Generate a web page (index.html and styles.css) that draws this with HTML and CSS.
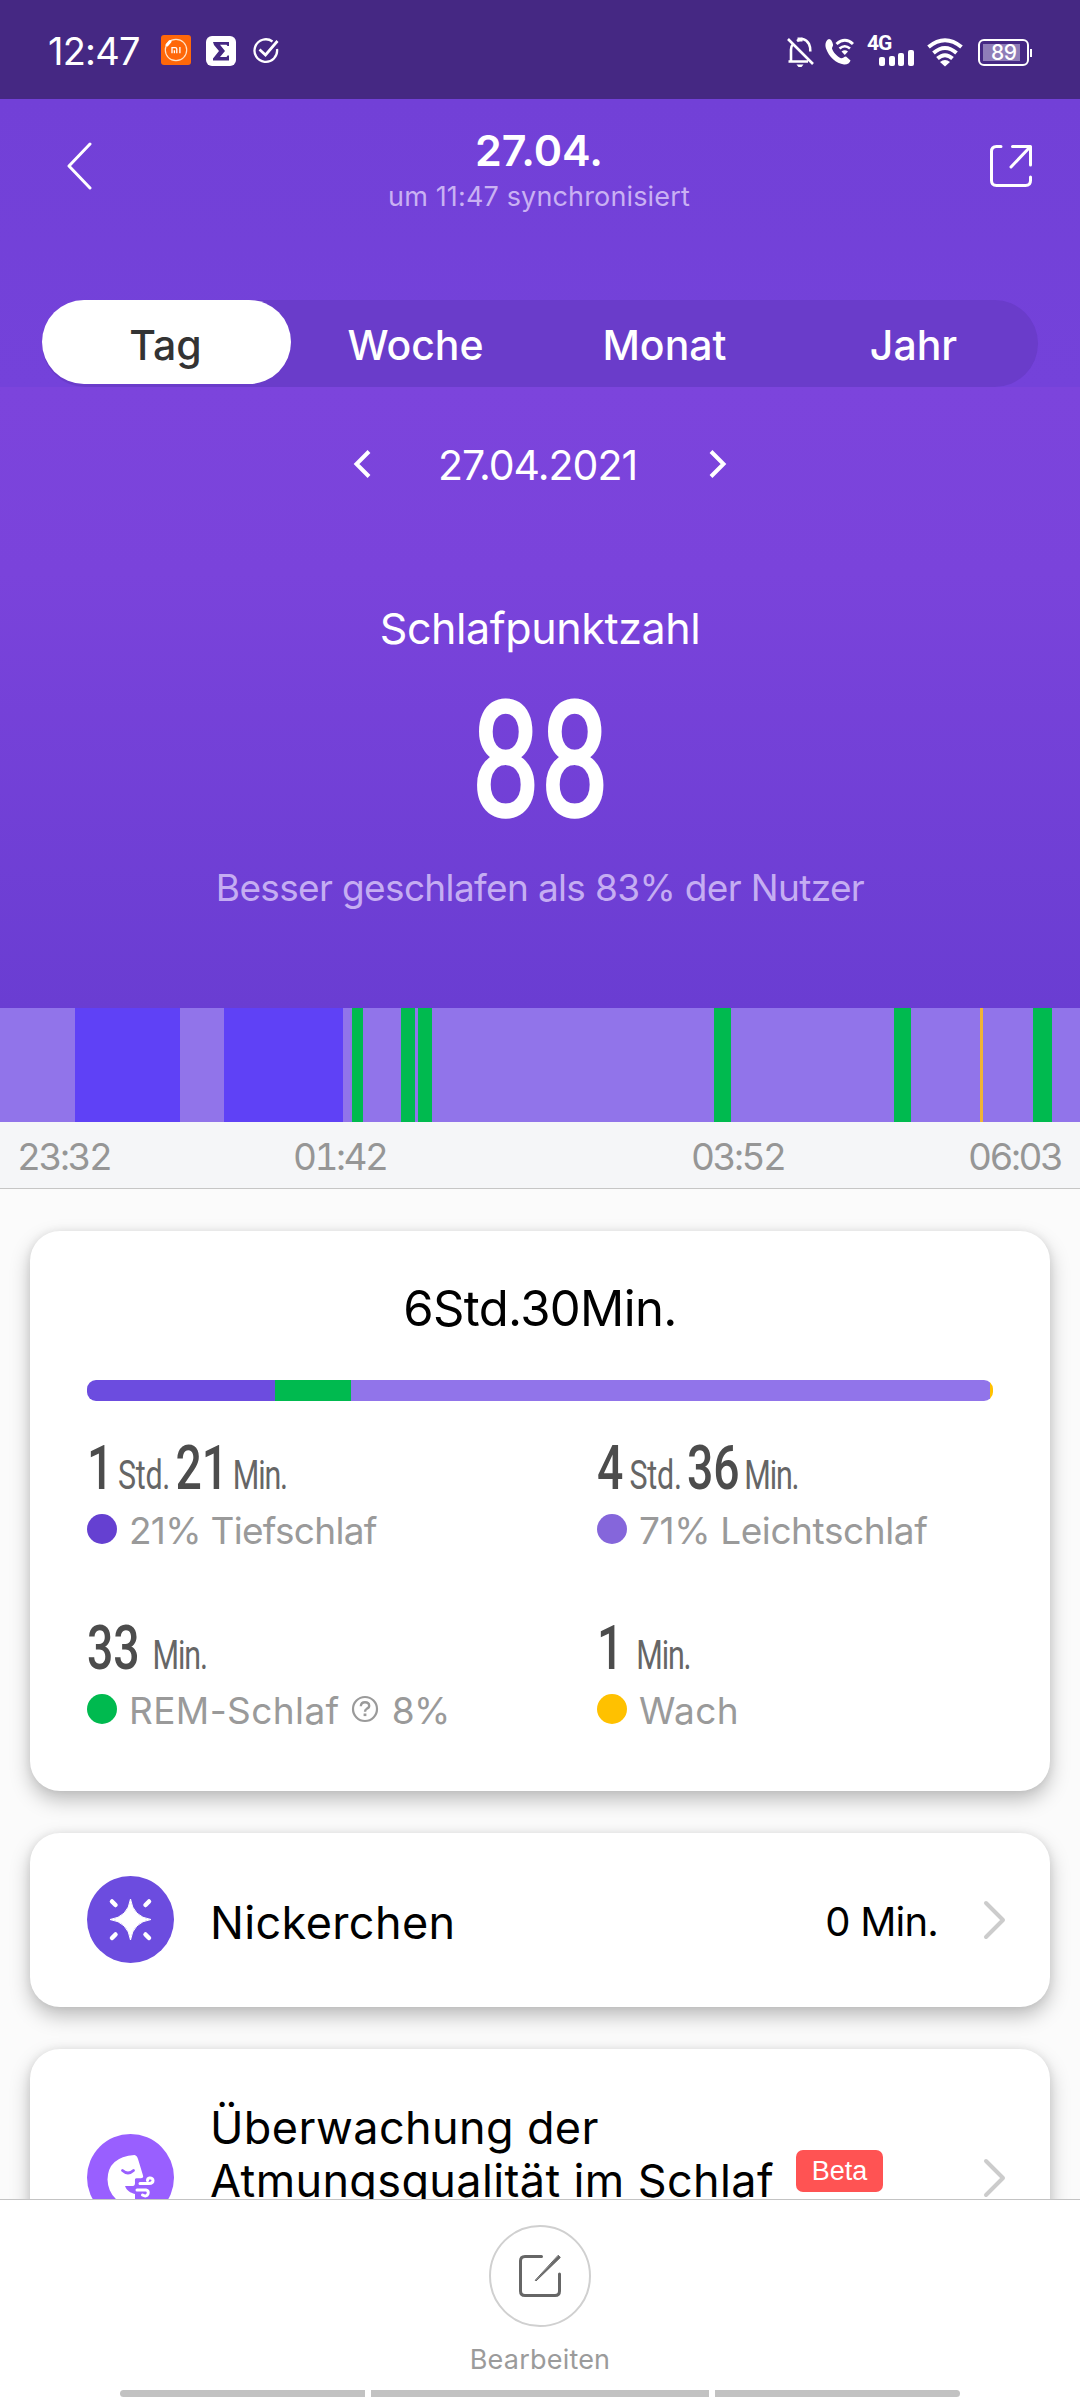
FILE: index.html
```html
<!DOCTYPE html>
<html lang="de">
<head>
<meta charset="utf-8">
<title>Schlaf</title>
<link rel="stylesheet" href="styles.css">
</head>
<body>
<div class="status">
  <span class="clock">12:47</span>
  <svg class="st-mi" width="30" height="30" viewBox="0 0 30 30"><rect width="30" height="30" rx="3" fill="#ff6709"/><circle cx="15" cy="15" r="10.700" fill="none" stroke="#ffe3c8" stroke-width="1.200"/><path d="M6 10l3-3.500" stroke="#fff" stroke-width="3" stroke-linecap="round"/><path d="M11 18.300v-5.600h3.300q1.500 0 1.500 1.300v4.300M13.400 18.300v-3M18.900 12v6.300" fill="none" stroke="#fff" stroke-width="1.300"/></svg>
  <svg class="st-sigma" width="30" height="30" viewBox="0 0 30 30"><rect width="30" height="30" rx="6" fill="#fff"/><path d="M7 6h16v4h-1.500l-1-1.300H14l5 6.300-5 6h6.500l1-1.500H23V24.500H7v-2l6-7.500-5-6z" fill="#452883"/></svg>
  <svg class="st-check" width="26" height="26" viewBox="0 0 26 26" fill="none" stroke="#fff" stroke-width="2.300"><path d="M19.500 3.500A11.300 11.300 0 1 0 24 11"/><path d="M6.500 11.500l6 5.500L24.500 3" stroke-width="2.700"/></svg>
  <span class="fill"></span>
  <svg class="st-bell" width="28" height="30" viewBox="0 0 28 30" fill="none" stroke="#fff" stroke-width="2.600"><path d="M4 24V12.500Q4.200 9 6 7M10 4Q17-1 22 7q1.500 3 1.300 7.500M1.500 24.500H21M1 2l25 25"/><path d="M9.500 27.500h7l-2 2.500h-3z" fill="#fff" stroke="none"/><path d="M10.500 2.500h5" stroke-width="4"/></svg>
  <svg class="st-call" width="29" height="28" viewBox="0 0 29 28" fill="none" stroke="#fff"><path d="M4 1C1 2-.5 6 1 10.500 4 19 11 25.500 19 26.500c3 .3 6-1.500 6.500-4l-4.500-4c-2 0-3 2-5 1.800C12 18.500 8 14 7 10.500 7 9 8.500 8 8 6.500 7.500 4 6 1 4 1z" fill="#fff" stroke="none"/><path d="M11.500 6Q20-1.500 28 6" stroke-width="3"/><path d="M14.500 10.500q5.300-4.500 10.500 0" stroke-width="2.600"/><path d="M16.500 13.500q3.300-2.500 6.500 0l-3.200 3.500z" fill="#fff" stroke="none"/></svg>
  <div class="signal">
    <span>4G</span>
    <div class="signal-bars"><i class="b1"></i><i class="b2"></i><i class="b3"></i><i class="b4"></i></div>
  </div>
  <svg class="st-wifi" width="36" height="29" viewBox="0 0 36 29" fill="none" stroke="#fff" stroke-width="4"><path d="M1.500 9Q18-4.500 34.500 9"/><path d="M6.500 15Q18 5 29.500 15"/><path d="M10.500 20.500q7.500-6.500 15 0"/><path d="M13 24q5-4 10 0l-5 4.500z" fill="#fff" stroke="none"/></svg>
  <div class="battery"><span>89</span></div>
</div>

<header class="header">
  <div class="title-row">
    <svg class="back" width="25" height="48" viewBox="0 0 25 48" fill="none" stroke="#fff" stroke-width="3" stroke-linecap="round" stroke-linejoin="round"><path d="M23 2L2 24l21 22"/></svg>
    <div class="titles">
      <h1>27.04.</h1>
      <p>um 11:47 synchronisiert</p>
    </div>
    <svg class="share" width="44" height="44" viewBox="0 0 44 44" fill="none" stroke="#fff" stroke-width="3" stroke-linecap="round" stroke-linejoin="round"><path d="M12 2.500H7.500q-5 0-5 5v29q0 5 5 5h29q5 0 5-5V33"/><path d="M23.500 2.500h18V21"/><path d="M40.500 3.500L22 23"/></svg>
  </div>
  <nav class="tabs">
    <span class="tab active">Tag</span><span class="tab">Woche</span><span class="tab">Monat</span><span class="tab">Jahr</span>
  </nav>
</header>

<section class="hero">
  <div class="date">
    <svg width="18" height="28" viewBox="0 0 18 28" fill="none" stroke="#fff" stroke-width="4"><path d="M16 1.500L3.500 14 16 26.500"/></svg>
    <span>27.04.2021</span>
    <svg width="18" height="28" viewBox="0 0 18 28" fill="none" stroke="#fff" stroke-width="4"><path d="M2 1.500L14.500 14 2 26.500"/></svg>
  </div>
  <div class="score-label">Schlafpunktzahl</div>
  <div class="score">88</div>
  <div class="score-note">Besser geschlafen als 83% der Nutzer</div>
</section>

<div class="timeline">
  <i style="width:74.500px"></i><i class="deep" style="width:105.500px"></i><i style="width:44px"></i><i class="deep" style="width:119px"></i><i style="width:8.500px"></i><i class="rem" style="width:11px"></i><i style="width:38.500px"></i><i class="rem" style="width:14px"></i><i style="width:3px"></i><i class="rem" style="width:14px"></i><i style="width:282px"></i><i class="rem" style="width:16.500px"></i><i style="width:163.500px"></i><i class="rem" style="width:16.500px"></i><i style="width:69.500px"></i><i class="awake" style="width:3px"></i><i style="width:49.500px"></i><i class="rem" style="width:19.500px"></i>
</div>
<div class="axis"><span>23:32</span><span>01:42</span><span>03:52</span><span>06:03</span></div>

<main class="content">
  <section class="card summary">
    <h2>6Std.30Min.</h2>
    <div class="bar"><i class="deep" style="width:187.500px"></i><i class="rem" style="width:76.500px"></i><i class="light"></i><i class="awake" style="width:3px"></i></div>
    <div class="stats">
      <div class="stat">
        <div class="value"><b class="one">1</b><small class="hours">Std.</small><b class="minutes">21</b><small class="min">Min.</small></div>
        <div class="label"><i class="dot deep"></i><span class="tighter">21% Tiefschlaf</span></div>
      </div>
      <div class="stat">
        <div class="value"><b>4</b><small class="hours">Std.</small><b class="minutes">36</b><small class="min">Min.</small></div>
        <div class="label"><i class="dot light"></i><span class="tight">71% Leichtschlaf</span></div>
      </div>
      <div class="stat">
        <div class="value"><b>33</b><small class="min alone">Min.</small></div>
        <div class="label"><i class="dot rem"></i><span class="loose">REM-Schlaf</span>
          <svg class="help" width="28" height="28" viewBox="0 0 28 28" fill="none" stroke="#9a9a9a" stroke-width="2.200"><circle cx="14" cy="14" r="12"/><path d="M9.800 11.200q.2-4 4.200-4t4.200 3.500q0 2-2.300 3-1.900 1-1.900 3" stroke-width="2.400"/><path d="M14 18.500v2.600" stroke-width="2.800"/></svg>
          <span class="tighter">8%</span></div>
      </div>
      <div class="stat">
        <div class="value"><b>1</b><small class="min alone">Min.</small></div>
        <div class="label"><i class="dot awake"></i><span class="loose">Wach</span></div>
      </div>
    </div>
  </section>

  <section class="card row nap">
    <svg class="badge-icon" width="87" height="87" viewBox="0 0 87 87"><circle cx="43.500" cy="43.500" r="43.500" fill="#6c4cdf"/><path d="M43.500 23Q46 41 64 43.500 46 46 43.500 64 41 46 23 43.500 41 41 43.500 23z" fill="#fff" stroke="#fff" stroke-width="1"/><path d="M25 25.500l3.500 3.500M62 25.500L58.500 29M25 62l3.500-3.500M62 62l-3.500-3.500" stroke="#fff" stroke-width="4.500" stroke-linecap="round"/></svg>
    <span class="name">Nickerchen</span>
    <span class="fill"></span>
    <span class="amount">0 Min.</span>
    <svg class="chev" width="24" height="40" viewBox="0 0 24 40"><path d="M3 3l17 17L3 37" fill="none" stroke="#ccc" stroke-width="4" stroke-linecap="round" stroke-linejoin="round"/></svg>
  </section>

  <section class="card row breath">
    <svg class="badge-icon" width="87" height="87" viewBox="0 0 87 87"><circle cx="43.500" cy="43.500" r="43.500" fill="#995fff"/><path d="M47.500 21Q50 21.500 51 25l5 16.500c.5 2-.3 2.700-2 2.700H49.500c-2 0-1.500 2-1.500 4.500 0 3-1 3.300-3.500 3.300H38c2 5 5 6.500 10 8v10H36Q21 62 20.500 45.500 21 23 47.500 21z" fill="#fff"/><path d="M35.500 36.500q5.500 5 11 0" fill="none" stroke="#995fff" stroke-width="2.800" stroke-linecap="round"/><path d="M53 49.500h9c5.500 0 5-6 .5-5.500-2 .3-2 1.500-2 2.500M50 56h9q3 .5 2 3.800-1.500 3.500-5.500 1.200" fill="none" stroke="#fff" stroke-width="3" stroke-linecap="round"/></svg>
    <span class="name">Überwachung der<br>Atmungsqualität im Schlaf</span>
    <span class="beta">Beta</span>
    <span class="fill"></span>
    <svg class="chev" width="24" height="40" viewBox="0 0 24 40"><path d="M3 3l17 17L3 37" fill="none" stroke="#ccc" stroke-width="4" stroke-linecap="round" stroke-linejoin="round"/></svg>
  </section>
</main>

<footer class="toolbar">
  <div class="edit">
    <svg width="44" height="44" viewBox="0 0 44 44" fill="none" stroke="#666" stroke-width="3" stroke-linecap="round" stroke-linejoin="round"><path d="M23.500 2.500H7q-4.500 0-4.500 4.500v30q0 4.500 4.500 4.500h30q4.500 0 4.500-4.500V20"/><path d="M40.500 1.500l1.800 2L18 27l-.5-.5z" fill="#666" stroke-width="1"/></svg>
  </div>
  <span class="edit-label">Bearbeiten</span>
  <div class="gesture"><i></i><i class="mid"></i><i></i></div>
</footer>
</body>
</html>
```

FILE: styles.css
```css
* { box-sizing: border-box; margin: 0; padding: 0; }
body {
  width: 1080px; height: 2400px; overflow: hidden;
  display: flex; flex-direction: column;
  font-family: Inter, "Liberation Sans", sans-serif;
  background: #fbfbfb; color: #000;
}
i { display: block; font-style: normal; }
svg { display: block; flex: none; }
span { white-space: nowrap; }
.fill { flex: 1; }

.status { height: 99px; flex: none; background: #452883; color: #fff; display: flex; align-items: flex-start; padding: 35px 51px 0 48px; }
.clock { font-size: 38px; line-height: 32px; width: 113px; letter-spacing: -.8px; }
.st-mi { margin-right: 15px; }
.st-sigma { margin: 1px 17px 0 0; }
.st-check { margin-top: 3px; }
.st-bell { margin: 2px 10px 0 0; }
.st-call { margin: 3px 13px 0 0; }
.signal { width: 49px; height: 31px; flex: none; display: flex; flex-direction: column; justify-content: space-between; }
.signal span { font: 700 21px/16px Roboto, sans-serif; height: 14px; letter-spacing: -1px; }
.signal-bars { display: flex; align-items: flex-end; gap: 3.500px; padding-left: 12px; }
.signal-bars i { width: 6px; background: #fff; border-radius: 2px; }
.b1 { height: 9px; } .b2 { height: 10.500px; } .b3 { height: 13.500px; } .b4 { height: 16.500px; }
.st-wifi { margin: 3px 15px 0 11px; }
.battery { width: 51px; height: 27px; margin-top: 4px; border: 2px solid #fff; border-radius: 6px; padding: 3px; position: relative; }
.battery span { display: block; width: 37px; height: 17px; background: #8f7db8; font: 500 21px/18px Inter, sans-serif; padding-left: 8px; letter-spacing: -.5px; }
.battery::after { content: ""; position: absolute; left: 50px; top: 8px; width: 2px; height: 8px; background: #fff; }

.header { height: 288px; flex: none; background: linear-gradient(#7240d7, #7442da); padding: 26px 42px 0; color: #fff; }
.title-row { display: flex; justify-content: space-between; height: 93px; }
.back { margin: 17px 0 0 25px; }
.share { margin: 19px 5px 0 0; }
.titles { width: 400px; padding-right: 3px; text-align: center; }
.titles h1 { font-size: 43px; line-height: 50px; font-weight: 600; }
.titles p { font-size: 27px; line-height: 43px; color: #c9b1f3; white-space: nowrap; letter-spacing: .15px; }
.tabs { margin-top: 82px; height: 87px; border-radius: 44px; background: #6a3cca; display: flex; }
.tab { width: 249px; height: 84px; line-height: 84px; padding-top: 3px; text-align: center; font-size: 41px; font-weight: 500; }
.tab.active { background: #fff; border-radius: 42px; color: #333; padding-right: 2px; }

.hero { height: 621px; flex: none; background: linear-gradient(#7c44dc, #7a43db 30%, #6a3dd2); color: #fff; display: flex; flex-direction: column; align-items: center; }
.date { width: 374px; margin-top: 48px; height: 60px; display: flex; justify-content: space-between; align-items: center; font-size: 41px; }
.date svg { margin-bottom: 3px; }
.date span { letter-spacing: -1px; padding-right: 5px; }
.score-label { margin-top: 103px; font-size: 43px; line-height: 60px; letter-spacing: -.4px; }
.score { margin-top: 32px; height: 139px; font: 400 159px/142px Roboto, sans-serif; letter-spacing: 1.500px; padding-left: 1px; -webkit-text-stroke: 3.500px #fff; transform: scaleX(.76); }
.score-note { margin-top: 34px; font-size: 37px; line-height: 50px; color: #c5adf2; letter-spacing: -.65px; }

.timeline { height: 114px; flex: none; display: flex; background: #9174ea; }
.timeline i { flex: none; }
.timeline .deep { background: #5f41f6; }
.rem { background: #00ba4f; }
.timeline .awake { background: #efb435; }
.axis { height: 67px; flex: none; background: #f5f6f8; border-bottom: 1px solid #c6c6c6; padding: 0 0 0 17px; display: grid; grid-template-columns: 276px 398px 277px auto; font-size: 37px; line-height: 69px; color: #969696; letter-spacing: -2.500px; font-variant-numeric: tabular-nums; }

.content { flex: 1; min-height: 0; overflow: hidden; padding: 42px 30px 0; }
.card { background: #fff; border-radius: 30px; box-shadow: 0 9px 20px rgba(0,0,0,.25), 0 0 8px rgba(0,0,0,.07); margin-bottom: 42px; }
.summary { height: 560px; padding: 48px 57px 0; }
.summary h2 { font-size: 49px; line-height: 60px; font-weight: 400; text-align: center; letter-spacing: -.65px; }
.bar { margin-top: 41px; height: 21px; border-radius: 9px; overflow: hidden; display: flex; }
.bar .deep { background: #6c4cdf; }
.bar .light { background: #9174ea; flex: 1; }
.awake { background: #ffc100; }
.stats { margin-top: 37px; display: grid; grid-template-columns: 510px 1fr; grid-auto-rows: 180px; }
.value { height: 60px; display: flex; align-items: baseline; font-family: Roboto, sans-serif; transform: scaleX(.76); transform-origin: 0 50%; white-space: nowrap; }
.value b { font-size: 61px; line-height: 60px; font-weight: 500; color: #4c4c4c; }
.value .one { letter-spacing: -2px; }
.value small { font-size: 40px; color: #666; }
.hours { margin-left: 8px; letter-spacing: -.300px; }
.minutes { margin-left: 7px; }
.min { margin-left: 6px; letter-spacing: -1.500px; }
.min.alone { margin-left: 17px; }
.label { display: flex; align-items: center; height: 64px; font-size: 37px; color: #9a9a9a; }
.tight { letter-spacing: -.4px; }
.tighter { letter-spacing: -.7px; }
.loose { letter-spacing: .4px; }
.dot { width: 30px; height: 30px; border-radius: 50%; margin: 0 12px 3px 0; }
.dot.deep { background: #6540d1; }
.dot.light { background: #8566db; }
.help { margin: 0 13px 2px 11px; }

.row { display: flex; align-items: center; padding: 0 43px 0 57px; }
.name { margin-left: 36px; font-size: 45px; line-height: 53px; letter-spacing: .37px; }
.nap { height: 174px; }
.nap .name { padding-top: 4px; }
.nap .badge-icon { margin-bottom: 1px; }
.amount { font-size: 40px; margin-right: 45px; padding-top: 3px; letter-spacing: -.8px; }
.breath { height: 257px; }
.breath .name { margin-top: -47px; }
.beta { margin: -13px 0 0 22px; width: 87px; height: 42px; border-radius: 7px; background: #ff5353; color: #fff; font: 400 27px/43px "Liberation Sans", sans-serif; text-align: center; }

.toolbar { height: 201px; flex: none; background: #fff; border-top: 1px solid #c4c4c4; display: flex; flex-direction: column; align-items: center; padding-top: 25px; }
.edit { width: 102px; height: 102px; border: 2px solid #d0d0d0; border-radius: 50%; display: flex; align-items: center; justify-content: center; }
.edit-label { margin-top: 13px; font-size: 27px; line-height: 40px; color: #9b9b9b; letter-spacing: .2px; }
.gesture { margin-top: 10px; display: flex; gap: 6px; }
.gesture i { width: 245px; height: 7px; background: #c2c2c2; border-radius: 4px 0 0 4px; }
.gesture i:last-child { border-radius: 0 4px 4px 0; }
.gesture .mid { width: 338px; border-radius: 0; }
```
